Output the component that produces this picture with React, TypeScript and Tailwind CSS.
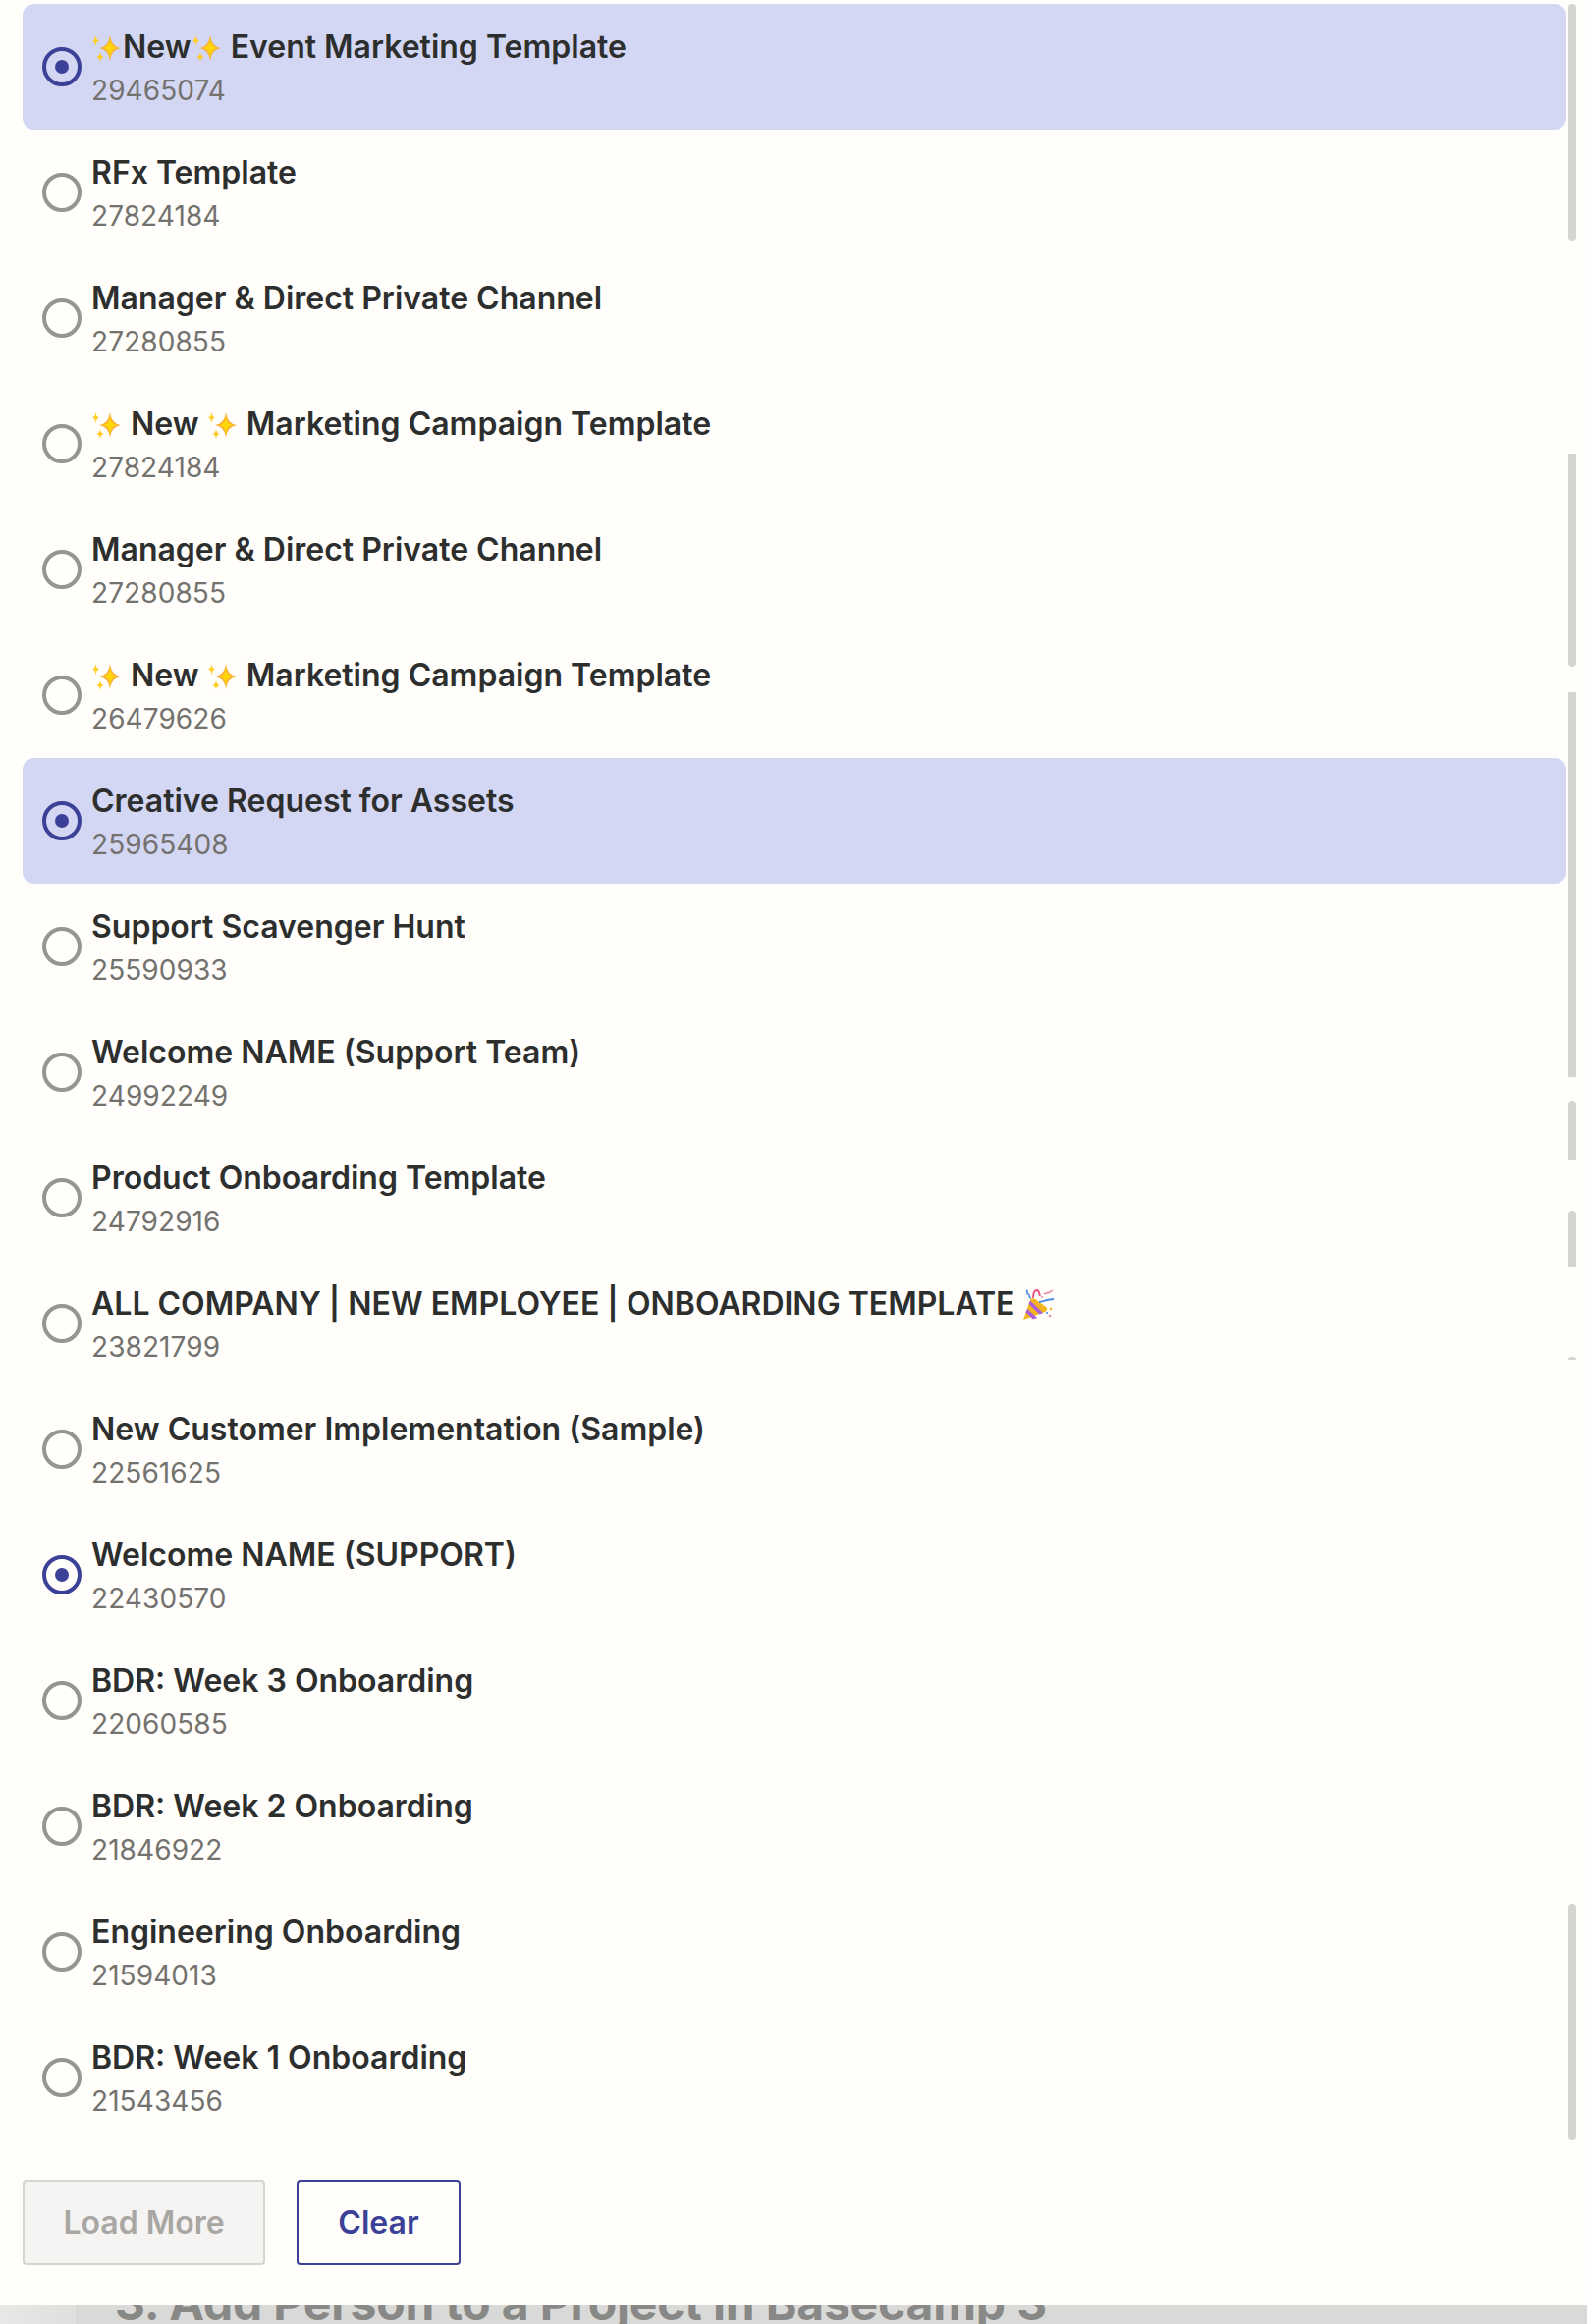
const INTER = "font-['Inter',sans-serif]";

function Star({ cx, cy, rx, ry, fill }: { cx: number; cy: number; rx: number; ry: number; fill: string }) {
  const d = `M${cx} ${cy - ry}Q${cx + rx * 0.12} ${cy - ry * 0.12} ${cx + rx} ${cy}Q${cx + rx * 0.12} ${cy + ry * 0.12} ${cx} ${cy + ry}Q${cx - rx * 0.12} ${cy + ry * 0.12} ${cx - rx} ${cy}Q${cx - rx * 0.12} ${cy - ry * 0.12} ${cx} ${cy - ry}z`;
  return <path d={d} fill={fill} />;
}

function Sparkles() {
  return (
    <svg viewBox="0 0 32 32" className="inline-block h-[32px] w-[32px] align-[-6px]">
      <Star cx={19} cy={16} rx={11} ry={13} fill="#fbb034" />
      <Star cx={19} cy={16} rx={7} ry={9} fill="#ffd60a" />
      <Star cx={4.500} cy={8.500} rx={3.500} ry={6} fill="#ffcf26" />
      <Star cx={9} cy={25} rx={4} ry={5} fill="#ffcb1f" />
    </svg>
  );
}

function Popper() {
  return (
    <svg viewBox="0 0 32 32" className="inline-block h-[32px] w-[32px] align-[-6px]">
      <path d="M1 31L8 11c1-2 3-2 5-1l11 8c2 2 1 4-1 5z" fill="#f4b41f" />
      <path d="M5 20l10 9-4 1.500-7.500-7z" fill="#a95fd8" />
      <path d="M8 11.500L21 24l-3.500 1.500L6.500 15z" fill="#a95fd8" />
      <path d="M4 1c3 1-1 3 2 4s-1 3 3 4" stroke="#4a8be8" strokeWidth="1.600" fill="none" />
      <path d="M11 9c0-4 1-8 4-8 2 0 2 3 3 6" stroke="#ea4d7f" strokeWidth="1.800" fill="none" />
      <path d="M17 13c5-1 10-3 15-3" stroke="#4a8be8" strokeWidth="1.800" fill="none" />
      <path d="M22 5c1-2 2 1 3-1s2 1 3-1 2 0 3-2" stroke="#e88aa8" strokeWidth="1.500" fill="none" />
      <circle cx="29" cy="20" r="1.300" fill="#f4b41f" />
      <circle cx="25" cy="24" r="1.100" fill="#4a8be8" />
      <circle cx="28" cy="27" r="1.300" fill="#e88aa8" />
      <circle cx="20" cy="8" r="1" fill="#e88aa8" />
    </svg>
  );
}

function Radio({ checked }: { checked?: boolean }) {
  if (checked) {
    return (
      <span className="flex h-10 w-10 shrink-0 items-center justify-center rounded-full border-[4px] border-[#3b4197]">
        <span className="h-[14px] w-[14px] rounded-full bg-[#3b4197]" />
      </span>
    );
  }
  return <span className="h-10 w-10 shrink-0 rounded-full border-[4px] border-[#969592]" />;
}

type Row = { title: React.ReactNode; id: string; checked?: boolean; highlight?: boolean };

const campaign = (
  <>
    <Sparkles /> New <Sparkles /> Marketing Campaign Template
  </>
);

const rows: Row[] = [
  {
    title: (
      <>
        <Sparkles />New<Sparkles /> Event Marketing Template
      </>
    ),
    id: "29465074",
    checked: true,
    highlight: true,
  },
  { title: "RFx Template", id: "27824184" },
  { title: "Manager & Direct Private Channel", id: "27280855" },
  { title: campaign, id: "27824184" },
  { title: "Manager & Direct Private Channel", id: "27280855" },
  { title: campaign, id: "26479626" },
  { title: "Creative Request for Assets", id: "25965408", checked: true, highlight: true },
  { title: "Support Scavenger Hunt", id: "25590933" },
  { title: "Welcome NAME (Support Team)", id: "24992249" },
  { title: "Product Onboarding Template", id: "24792916" },
  {
    title: (
      <>
        ALL COMPANY | NEW EMPLOYEE | ONBOARDING TEMPLATE <Popper />
      </>
    ),
    id: "23821799",
  },
  { title: "New Customer Implementation (Sample)", id: "22561625" },
  { title: "Welcome NAME (SUPPORT)", id: "22430570", checked: true },
  { title: "BDR: Week 3 Onboarding", id: "22060585" },
  { title: "BDR: Week 2 Onboarding", id: "21846922" },
  { title: "Engineering Onboarding", id: "21594013" },
  { title: "BDR: Week 1 Onboarding", id: "21543456" },
];

export default function App() {
  return (
    <div className={`flex h-[2367px] w-[1616px] flex-col overflow-hidden bg-[#d9d9d7] ${INTER}`}>
      <div className="flex h-[2348px] shrink-0 flex-col bg-[#fffefb] pl-[23px] pt-[4px]">
        <div className="flex h-[2180px] gap-[2px]">
          <div className="flex w-[1572px] flex-col">
            {rows.map((r, i) => (
              <div
                key={i}
                className={`flex h-[128px] shrink-0 items-center gap-[10px] rounded-[12px] pl-[20px] ${r.highlight ? "bg-[#d3d7f4]" : ""}`}
              >
                <Radio checked={r.checked} />
                <div className="flex flex-col pt-[4px]">
                  <div className="h-[43px] whitespace-nowrap text-[32px] font-semibold leading-[43px] text-[#2d2e2e]">{r.title}</div>
                  <div className="mt-[2px] h-[43px] text-[28px] leading-[43px] tracking-[0.08px] text-[#73726e]">{r.id}</div>
                </div>
              </div>
            ))}
          </div>
          <div className="flex w-[8px] flex-col">
            <div className="h-[241px] rounded-[4px] bg-[#d5d4d0]" />
            <div className="mt-[217px] h-[217px] rounded-b-[4px] bg-[#d5d4d0]" />
            <div className="mt-[26px] h-[392px] bg-[#d5d4d0]" />
            <div className="mt-[24px] h-[60px] rounded-t-[4px] bg-[#d5d4d0]" />
            <div className="mt-[52px] h-[57px] rounded-t-[4px] bg-[#d5d4d0]" />
            <div className="mt-[92px] h-[3px] rounded-t-[4px] bg-[#d5d4d0]" />
            <div className="mt-[554px] h-[241px] rounded-[4px] bg-[#d5d4d0]" />
          </div>
        </div>
        <div className="mt-[36px] flex gap-[32px]">
          <button className="h-[87px] w-[247px] rounded-[4px] border-2 border-[#d5d4d0] bg-[#f5f4f2] text-[32px] font-semibold text-[#a8a7a3]">
            Load More
          </button>
          <button className="h-[87px] w-[167px] rounded-[4px] border-2 border-[#3b4197] text-[32px] font-semibold text-[#3b4197]">
            Clear
          </button>
        </div>
      </div>
      <div className="flex h-[19px] overflow-hidden">
        <div className="h-full w-[79px] shrink-0 border-r border-[#d3d3d1] bg-gradient-to-r from-[#e8e8e6] to-[#dfdfdd]" />
        <div className="-mt-[30px] ml-[38px] whitespace-nowrap text-[48px] font-bold leading-[56px] tracking-[-0.18px] text-[#888886]">
          3. Add Person to a Project in Basecamp 3
        </div>
      </div>
    </div>
  );
}
